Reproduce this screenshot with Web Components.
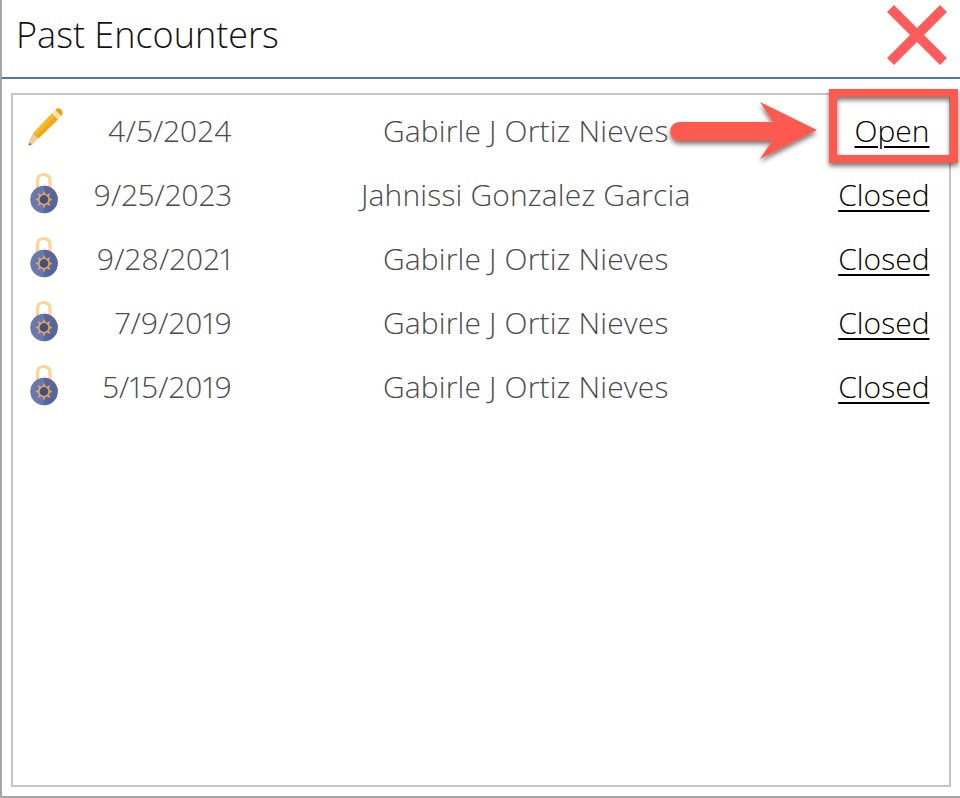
<!DOCTYPE html>
<html>
<head>
<meta charset="utf-8">
<title>Past Encounters</title>
<style>
html, body { margin: 0; padding: 0; background: #fff; }
body { width: 960px; height: 798px; overflow: hidden; font-family: "Open Sans", "Liberation Sans", sans-serif; }
</style>
</head>
<body>
<encounters-window heading="Past Encounters">
    <encounter-row kind="edit" date="4/5/2024" provider="Gabirle J Ortiz Nieves" status="Open"></encounter-row>
    <encounter-row kind="lock" date="9/25/2023" provider="Jahnissi Gonzalez Garcia" status="Closed"></encounter-row>
    <encounter-row kind="lock" date="9/28/2021" provider="Gabirle J Ortiz Nieves" status="Closed"></encounter-row>
    <encounter-row kind="lock" date="7/9/2019" provider="Gabirle J Ortiz Nieves" status="Closed"></encounter-row>
    <encounter-row kind="lock" date="5/15/2019" provider="Gabirle J Ortiz Nieves" status="Closed"></encounter-row>
</encounters-window>

<script>
const pencilIcon = `
<svg class="pencil" width="40" height="40" viewBox="0 0 40 40">
    <polygon points="4,32 7.5,26 12.5,31 6,38 2.5,38.5" fill="#efc9a0"/>
    <polygon points="2.5,38.5 3.3,35.5 5.5,37.7" fill="#8a6a4a"/>
    <polygon points="7,26.5 26,6.5 32,12.5 12.5,31.5" fill="#f2a60f"/>
    <polygon points="7,26.5 26,6.5 29,9.5 9.8,29.3" fill="#f7b92a"/>
    <polygon points="26,6.5 29.5,3 35.5,9 32,12.5" fill="#f8e3a8"/>
    <path d="M29.5 3 L31 1.6 C33 0 37.5 3.5 36.6 6.6 L35.5 9 Z" fill="#ef9f0b"/>
</svg>`;

const lockIcon = `
<svg class="lock" width="40" height="46" viewBox="0 0 40 46">
    <path d="M12.5 20 V9.5 C12.5 1.5 25 1.5 25 9.5 V20" fill="none" stroke="#fbd68b" stroke-width="3.2"/>
    <circle cx="19" cy="28.5" r="13.7" fill="#6a78b1"/>
    <path d="M19 14.8 A13.7 13.7 0 0 1 19 42.2 Z" fill="#58669f"/>
    <g stroke="#e7ad55" stroke-width="1.6">
        <line x1="19" y1="20.5" x2="19" y2="36.5"/>
        <line x1="11" y1="28.5" x2="27" y2="28.5"/>
        <line x1="13.3" y1="22.8" x2="24.7" y2="34.2"/>
        <line x1="24.7" y1="22.8" x2="13.3" y2="34.2"/>
    </g>
    <circle cx="19" cy="28.5" r="5.2" fill="#44507f" stroke="#e7ad55" stroke-width="1.6"/>
</svg>`;

class EncountersWindow extends HTMLElement {
    constructor() {
        super();
        this.attachShadow({ mode: 'open' });
    }

    connectedCallback() {
        this.shadowRoot.innerHTML = `
            <style>
                :host {
                    display: flex;
                    flex-direction: column;
                    box-sizing: border-box;
                    position: relative;
                    width: 960px;
                    height: 798px;
                    border-left: 2px solid #a6a6a6;
                    border-bottom: 2px solid #a6a6a6;
                }
                .header {
                    display: flex;
                    align-items: center;
                    justify-content: space-between;
                    flex: none;
                    box-sizing: border-box;
                    padding: 0 13px 7px 14px;
                    border-bottom: 2px solid #4f79a8;
                    height: 79px;
                }
                h1 {
                    margin: 0 0 1px;
                    font-size: 36px;
                    font-weight: 300;
                    color: #111;
                }
                .list {
                    flex: 1;
                    margin: 14px 9px 9px 9px;
                    border: 2px solid #c4c4c4;
                    padding-top: 3px;
                }
                .annotation { position: absolute; left: 0; top: 0; pointer-events: none; }
            </style>
            <div class="header">
                <h1>${this.getAttribute('heading')}</h1>
                <svg width="60" height="60" viewBox="0 0 60 60">
                    <path d="M7 0 L30 23 L53 0 L60 7 L37 30 L60 53 L53 60 L30 37 L7 60 L0 53 L23 30 L0 7 Z" fill="#fd5c5c"/>
                </svg>
            </div>
            <div class="list"><slot></slot></div>
            <svg class="annotation" width="958" height="796" viewBox="2 0 958 796">
                <defs>
                    <filter id="shadow" x="-10%" y="-20%" width="120%" height="150%">
                        <feDropShadow dx="0" dy="3" stdDeviation="2.5" flood-color="#000" flood-opacity="0.55"/>
                    </filter>
                </defs>
                <g filter="url(#shadow)" fill="none">
                    <rect x="833" y="93" width="121" height="66" stroke="#fd5a4f" stroke-width="8"/>
                </g>
                <path filter="url(#shadow)" fill="#fd5a4f" d="M680 122 H773 L760 102 L817 130 L760 159 L772 141 H680 C667 141 667 122 680 122 Z"/>
            </svg>
        `;
    }
}

class EncounterRow extends HTMLElement {
    constructor() {
        super();
        this.attachShadow({ mode: 'open' });
    }

    connectedCallback() {
        const kind = this.getAttribute('kind');
        this.shadowRoot.innerHTML = `
            <style>
                :host {
                    display: grid;
                    grid-template-columns: 50px 169px 1fr 120px;
                    align-items: center;
                    height: 64px;
                    padding-right: 19.5px;
                    font-size: 30px;
                    font-weight: 300;
                    color: #4a4a4a;
                }
                .icon { display: flex; min-width: 0; }
                svg { flex: none; }
                .pencil { margin: -6px 0 0 12.5px; }
                .lock { margin: 0 0 0 12px; }
                .date { text-align: right; font-variant-numeric: proportional-nums; letter-spacing: 0.3px; }
                .provider { text-align: center; padding-left: 10px; letter-spacing: 0.15px; }
                .status { text-align: right; }
                a { color: #000; text-decoration: underline; text-underline-offset: 4px; text-decoration-thickness: 2px; }
            </style>
            <div class="icon">${kind === 'edit' ? pencilIcon : lockIcon}</div>
            <div class="date">${this.getAttribute('date')}</div>
            <div class="provider">${this.getAttribute('provider')}</div>
            <div class="status"><a href="#">${this.getAttribute('status')}</a></div>
        `;
    }
}

customElements.define('encounters-window', EncountersWindow);
customElements.define('encounter-row', EncounterRow);
</script>
</body>
</html>
